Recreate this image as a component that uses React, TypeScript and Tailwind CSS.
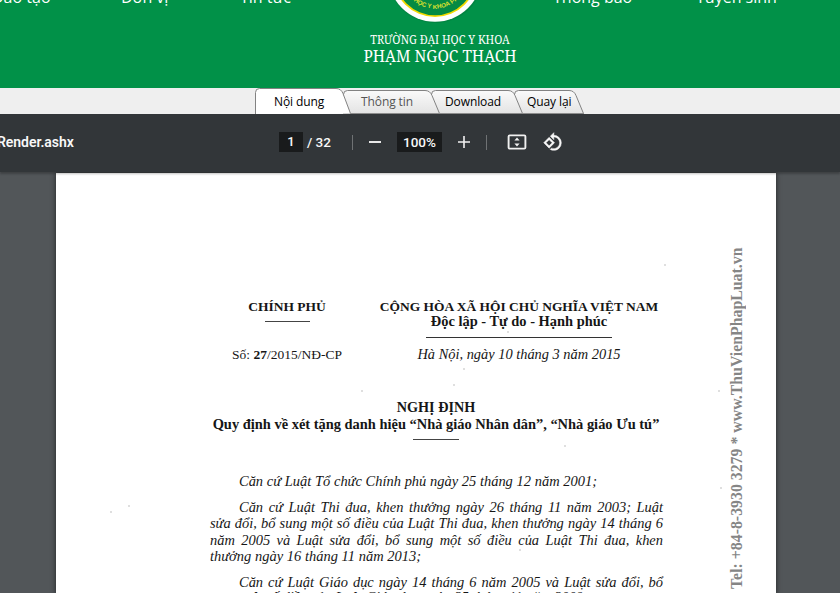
import { MdRotate90DegreesCcw } from "react-icons/md";

const navItems = [
  { label: "Đào tạo", box: "ml-[-8px] w-[60px]" },
  { label: "Đơn vị", box: "ml-[69px] w-[48px]" },
  { label: "Tin tức", box: "ml-[71px] w-[51px]" },
  { label: "Thông báo", box: "ml-[262px] w-[78px]" },
  { label: "Tuyển sinh", box: "ml-[65px] w-[81px]" },
];

function Logo() {
  return (
    <svg width="100" height="25" viewBox="0 0 100 25" className="block">
      <defs>
        <path id="ring" d="M16.5 -25 A33.5 33.5 0 0 0 83.5 -25" />
      </defs>
      <circle cx="50.5" cy="-25" r="48" fill="#04773a" opacity="0.5" />
      <circle cx="50" cy="-25" r="46.8" fill="#fff" />
      <circle cx="50" cy="-25" r="42" fill="#f3d900" />
      <circle cx="50" cy="-25" r="40.2" fill="#058a43" />
      <text fill="#dfe02f" fontSize="6.2" fontWeight="700" fontFamily="Liberation Sans, sans-serif">
        <textPath href="#ring" startOffset="50%" textAnchor="middle">
          ĐẠI HỌC Y KHOA PHẠM
        </textPath>
      </text>
    </svg>
  );
}

function Header() {
  return (
    <header className="flex h-[88px] shrink-0 flex-col overflow-hidden bg-[#019148] text-white">
      <div className="relative h-[31px] shrink-0">
        <nav className="mt-[-13px] flex font-['Open_Sans',sans-serif] text-[16px] leading-[20px] font-medium">
          {navItems.map((n) => (
            <span key={n.label} className={`shrink-0 whitespace-nowrap ${n.box}`}>{n.label}</span>
          ))}
        </nav>
        <div className="absolute top-0 left-[385px]"><Logo /></div>
      </div>
      <div className="flex w-[880px] scale-x-[0.91] flex-col items-center font-['Noto_Serif','Liberation_Serif',serif]">
        <span className="text-[12px] leading-[17px]">TRƯỜNG ĐẠI HỌC Y KHOA</span>
        <span className="text-[17px] leading-[15px]">PHẠM NGỌC THẠCH</span>
      </div>
    </header>
  );
}

const tabs = [
  { label: "Nội dung", w: 96, box: "z-40 w-[88px] pl-[19px]", active: true, color: "text-black" },
  { label: "Thông tin", w: 97, box: "z-30 w-[88px] pl-[18px]", active: false, color: "text-[#555]" },
  { label: "Download", w: 92, box: "z-20 w-[83px] pl-[14px]", active: false, color: "text-black" },
  { label: "Quay lại", w: 70, box: "z-10 w-[70px] pl-[13px]", active: false, color: "text-black" },
];

function TabBar() {
  return (
    <div className="flex h-[26px] shrink-0 bg-[#efefef] pl-[255px]">
      {tabs.map((t) => {
        const top = t.active ? 0.5 : 2.5;
        const w = t.w;
        return (
          <div key={t.label} className={`relative shrink-0 ${t.box}`}>
            <svg className="absolute top-0 left-0" width={w} height="26" viewBox={`0 0 ${w} 26`}>
              <defs>
                <linearGradient id="tabFill" x1="0" y1="0" x2="0" y2="1">
                  <stop offset="0" stopColor="#fafafa" />
                  <stop offset="1" stopColor="#e2e2e2" />
                </linearGradient>
              </defs>
              <path
                d={`M0.5 27 V${top + 4} Q0.5 ${top} 4.5 ${top} H${w - 15} Q${w - 10} ${top} ${w - 8} ${top + 5} L${w - 0.5} 25.5`}
                fill={t.active ? "#fff" : "url(#tabFill)"}
                stroke="#828282"
              />
              {!t.active && <path d={`M0 25.5H${w}`} stroke="#8c8c8c" />}
            </svg>
            <span className={`relative block whitespace-nowrap pt-[5px] font-['Open_Sans',sans-serif] text-[12px] leading-[18px] tracking-[-0.1px] ${t.color}`}>
              {t.label}
            </span>
          </div>
        );
      })}
    </div>
  );
}

function FitPageIcon() {
  return (
    <svg width="20" height="16" viewBox="0 0 20 16" className="block" fill="none">
      <rect x="1.6" y="1.4" width="16.8" height="13.2" rx="1.2" stroke="#f1f1f1" strokeWidth="1.9" />
      <path d="M10 3.6 L12.6 6.6 H7.4Z M10 12.4 L12.6 9.4 H7.4Z" fill="#f1f1f1" />
    </svg>
  );
}

function Toolbar() {
  return (
    <div className="z-10 flex h-[58px] shrink-0 items-center bg-[#323639] pb-[2px] font-[Roboto,sans-serif] text-[14px] font-medium text-[#f8f8f8] shadow-[0_2px_2px_rgba(0,0,0,0.25)]">
      <span className="ml-[-3px] w-[282px] font-semibold tracking-[-0.05px]">Render.ashx</span>
      <span className="flex h-5 w-6 items-center justify-center bg-[#191b1c] text-[13px]">1</span>
      <span className="ml-[4px] w-[45px] text-[13.5px]">/ 32</span>
      <span className="h-[15px] w-px bg-[#6f7274]" />
      <span className="ml-[16px] h-[2px] w-[12px] bg-[#e8e8e8]" />
      <span className="ml-[16px] flex h-5 w-[45px] items-center justify-center bg-[#191b1c] text-[13.5px]">100%</span>
      <svg className="ml-[15px]" width="14" height="14" viewBox="0 0 14 14">
        <path d="M7 1v12M1 7h12" stroke="#f1f1f1" strokeWidth="1.6" />
      </svg>
      <span className="ml-[15px] h-[15px] w-px bg-[#6f7274]" />
      <span className="ml-[20px]"><FitPageIcon /></span>
      <MdRotate90DegreesCcw className="ml-[16px] [&>path:last-child]:stroke-current [&>path:last-child]:[stroke-width:0.6]" size={20} stroke="none" strokeWidth={0} />
    </div>
  );
}

const body = [
  { text: "Căn cứ Luật Tổ chức Chính phủ ngày 25 tháng 12 năm 2001;", box: "ml-[29px] w-[358px] mb-[10px]" },
  { text: "Căn cứ Luật Thi đua, khen thưởng ngày 26 tháng 11 năm 2003; Luật", box: "ml-[29px] w-[424px]" },
  { text: "sửa đổi, bổ sung một số điều của Luật Thi đua, khen thưởng ngày 14 tháng 6", box: "w-[453px]" },
  { text: "năm 2005 và Luật sửa đổi, bổ sung một số điều của Luật Thi đua, khen", box: "w-[453px]" },
  { text: "thưởng ngày 16 tháng 11 năm 2013;", box: "w-[211px] mb-[10px]" },
  { text: "Căn cứ Luật Giáo dục ngày 14 tháng 6 năm 2005 và Luật sửa đổi, bổ", box: "ml-[29px] w-[424px]" },
  { text: "sung một số điều của Luật Giáo dục ngày 25 tháng 11 năm 2009;", box: "w-[378px] mt-[-1px]" },
];

const specks = [
  "left-[608px] top-[91px]", "left-[407px] top-[195px]", "left-[397px] top-[211px]",
  "left-[451px] top-[158px]", "left-[305px] top-[217px]", "left-[508px] top-[272px]",
  "left-[72px] top-[332px]", "left-[54px] top-[338px]", "left-[662px] top-[217px]",
  "left-[664px] top-[314px]", "left-[463px] top-[376px]",
];

function Page() {
  return (
    <article className="relative h-[421px] w-[720px] shrink-0 overflow-hidden bg-white pl-[153px] font-['Liberation_Serif',serif] text-[#161616] shadow-[0_0_5px_rgba(0,0,0,0.6)]">
      <div className="flex pt-[126px] font-bold">
        <div className="flex w-[156px] flex-col items-center">
          <span className="text-[13.5px] leading-[16px]">CHÍNH PHỦ</span>
          <span className="mt-[6px] h-px w-[45px] bg-[#444]" />
          <span className="mt-[25px] text-[13.5px] leading-[16px] font-normal">Số: <b>27</b>/2015/NĐ-CP</span>
        </div>
        <div className="ml-[14px] flex w-[280px] flex-col items-center">
          <span className="whitespace-nowrap text-[13.45px] leading-[16px]">CỘNG HÒA XÃ HỘI CHỦ NGHĨA VIỆT NAM</span>
          <span className="mt-[-2px] text-[14.45px] leading-[16px]">Độc lập - Tự do - Hạnh phúc</span>
          <span className="mt-[8px] h-px w-[186px] bg-[#333]" />
          <span className="mt-[8px] text-[14.4px] leading-[16px] font-normal italic">Hà Nội, ngày 10 tháng 3 năm 2015</span>
        </div>
      </div>
      <div className="mt-[36px] flex w-[454px] flex-col items-center font-bold">
        <span className="text-[14.2px] leading-[17px]">NGHỊ ĐỊNH</span>
        <span className="whitespace-nowrap text-[14.45px] leading-[17px]">Quy định về xét tặng danh hiệu “Nhà giáo Nhân dân”, “Nhà giáo Ưu tú”</span>
        <span className="mt-[6px] h-px w-[46px] bg-[#444]" />
      </div>
      <div className="mt-[33px] ml-px text-[14.45px] leading-[16.2px] italic">
        {body.map((l) => (
          <p key={l.text} className={`whitespace-nowrap [text-align-last:justify] ${l.box}`}>{l.text}</p>
        ))}
      </div>
      {specks.map((s) => (
        <i key={s} className={`absolute size-[2px] rounded-full bg-[#d4d4d4] ${s}`} />
      ))}
      <div className="absolute top-[74px] left-[671px] h-[342px] rotate-180 text-[15.85px] leading-[20px] font-bold whitespace-nowrap text-[#858585] [writing-mode:vertical-rl]">
        Tel: +84-8-3930 3279 * www.ThuVienPhapLuat.vn
      </div>
    </article>
  );
}

export default function App() {
  return (
    <div className="flex h-[593px] w-[840px] flex-col overflow-hidden bg-[#525659]">
      <Header />
      <TabBar />
      <Toolbar />
      <main className="flex min-h-0 flex-1 pt-px pl-[56px]">
        <Page />
      </main>
    </div>
  );
}
